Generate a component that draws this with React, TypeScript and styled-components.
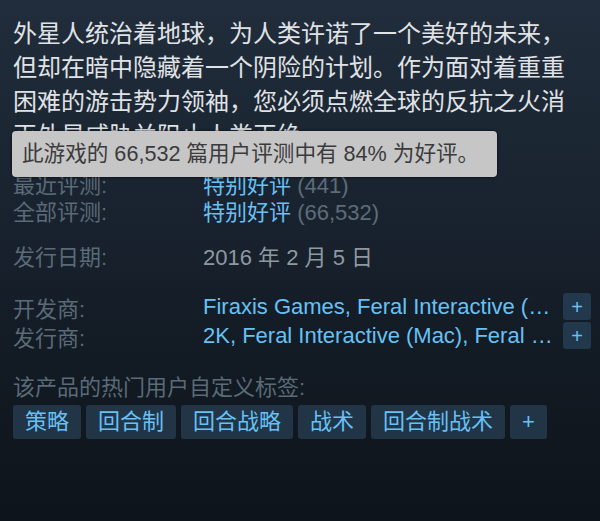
import React from "react";
import styled, { createGlobalStyle } from "styled-components";

const GlobalStyle = createGlobalStyle`
  html, body {
    margin: 0;
    padding: 0;
    background: #0e141b;
  }
  body {
    font-family: "Liberation Sans", "Noto Sans CJK SC", Arial, sans-serif;
  }
`;

const Page = styled.div`
  position: relative;
  box-sizing: border-box;
  width: 600px;
  height: 521px;
  overflow: hidden;
  padding: 17px 9px 0 13px;
  background: linear-gradient(180deg, #212d3c 0%, #19232f 40%, #121a23 70%, #0e141b 100%);
`;

const Description = styled.p`
  margin: 0;
  max-width: 560px;
  font-size: 24px;
  line-height: 34px;
  color: #e0e3e6;
`;

const Group = styled.div<{ $gap: number }>`
  margin-top: ${(p) => p.$gap}px;
`;

const Row = styled.div<{ $h?: number }>`
  display: flex;
  align-items: center;
  height: ${(p) => p.$h ?? 29}px;
  font-size: 22px;
  white-space: nowrap;
`;

const Label = styled.div`
  flex: 0 0 190px;
  color: #5a6a77;
`;

const Value = styled.div<{ $muted?: boolean }>`
  flex: 0 0 auto;
  max-width: 352px;
  overflow: hidden;
  color: ${(p) => (p.$muted ? "#8f98a0" : "#67c1f5")};
`;

const Count = styled.span`
  color: #5d6c78;
`;

const MoreButton = styled.div`
  margin-left: auto;
  width: 28px;
  height: 27px;
  border-radius: 3px;
  background: #22384c;
  color: #67c1f5;
  display: flex;
  align-items: center;
  justify-content: center;
  font-size: 20px;
  line-height: 1;
`;

const TagsHeading = styled.div`
  margin-top: 23px;
  height: 29px;
  line-height: 29px;
  font-size: 22px;
  color: #5a6a77;
`;

const TagList = styled.div`
  display: flex;
  gap: 5px;
  margin-top: 3px;
`;

const Tag = styled.div`
  height: 34px;
  line-height: 34px;
  padding: 0 12px;
  border-radius: 3px;
  background: #213547;
  color: #67c1f5;
  font-size: 22px;
`;

const Tooltip = styled.div`
  position: absolute;
  left: 12px;
  top: 131px;
  box-sizing: border-box;
  width: 485px;
  height: 46px;
  padding: 0 10px;
  border-radius: 4px;
  background: #c6c6c6;
  box-shadow: 0 0 3px rgba(0, 0, 0, 0.8);
  color: #3b3b3d;
  font-size: 21.6px;
  line-height: 46px;
  white-space: nowrap;
`;

const tags = ["策略", "回合制", "回合战略", "战术", "回合制战术", "+"];

export default function App() {
  return (
    <>
      <GlobalStyle />
      <Page>
        <Description>
          外星人统治着地球，为人类许诺了一个美好的未来，但却在暗中隐藏着一个阴险的计划。作为面对着重重困难的游击势力领袖，您必须点燃全球的反抗之火消灭外星威胁并阻止人类灭绝。
        </Description>

        <Group $gap={16}>
          <Row $h={27}>
            <Label>最近评测:</Label>
            <Value>
              特别好评 <Count>(441)</Count>
            </Value>
          </Row>
          <Row $h={27}>
            <Label>全部评测:</Label>
            <Value>
              特别好评 <Count>(66,532)</Count>
            </Value>
          </Row>
        </Group>

        <Group $gap={17}>
          <Row>
            <Label>发行日期:</Label>
            <Value $muted>2016 年 2 月 5 日</Value>
          </Row>
        </Group>

        <Group $gap={23}>
          <Row>
            <Label>开发商:</Label>
            <Value>Firaxis Games, Feral Interactive (…</Value>
            <MoreButton>+</MoreButton>
          </Row>
          <Row>
            <Label>发行商:</Label>
            <Value>2K, Feral Interactive (Mac), Feral …</Value>
            <MoreButton>+</MoreButton>
          </Row>
        </Group>

        <TagsHeading>该产品的热门用户自定义标签:</TagsHeading>
        <TagList>
          {tags.map((t) => (
            <Tag key={t}>{t}</Tag>
          ))}
        </TagList>

        <Tooltip>此游戏的 66,532 篇用户评测中有 84% 为好评。</Tooltip>
      </Page>
    </>
  );
}
